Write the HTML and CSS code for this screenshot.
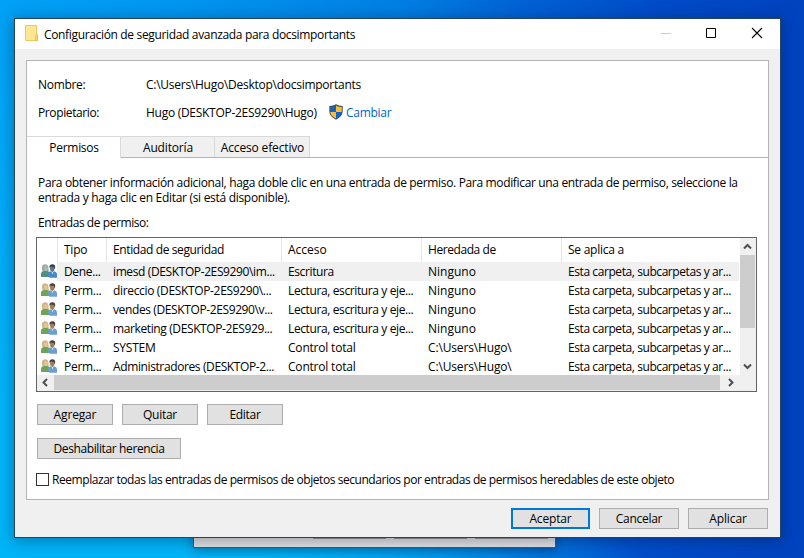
FILE: index.html
```html
<!DOCTYPE html>
<html lang="es">
<head>
<meta charset="utf-8">
<title>Configuración de seguridad avanzada</title>
<link rel="stylesheet" href="styles.css">
</head>
<body>
<svg width="0" height="0" class="defs">
  <defs>
    <symbol id="users" viewBox="0 0 16 14">
      <path class="u-hair1" d="M1.2 1.8Q2 .2 4.2.2Q6.900 .2 7.300 3L7.800 7.200L1.500 7.400Q.3 4 1.200 1.800Z"/>
      <path class="u-face1" d="M3.200 2.600L6.200 2.200L6.700 5.400L5.300 7.200L3.400 6Z"/>
      <path class="u-body1" d="M0 12.900V9.300Q.3 7.300 3 7L6.200 7Q8.800 7.200 9 9.300V13H2Z"/>
      <path class="u-face2" d="M8.800 2H13.500L13.300 6.200L11.300 8.200L9.300 6.500Z"/>
      <path class="u-hair2" d="M8.500 3.800V1.700Q9.300 0 11.400 .2Q14.300 .3 14.200 3.400L13.500 5.500L12.900 3L9.900 2.400Z"/>
      <path class="u-body2" d="M7.200 12V9.600Q7.500 7.800 9.600 7.300L11.300 8.500L13.200 7.300Q15.800 7.800 16 10V13.700H9Q7.200 13.300 7.200 12Z"/>
      <path class="u-shirt" d="M10.600 8L11.600 8.600L12.300 8L11.900 10.400Z"/>
    </symbol>
  </defs>
</svg>
<div class="back-window"><i></i><i></i><i></i></div>
<main class="window">
  <header class="titlebar">
    <svg class="folder" width="14" height="17" viewBox="0 0 14 17"><path d="M.5 .5H11.500V10L12.500 9.500V15.500H.5Z" fill="#ffe694" stroke="#ebcb5b"/><path d="M10.500 15V10.500L11.500 9.500H12.500V15.500H10.500Z" fill="#fbdc7c" stroke="#e7c04d"/></svg>
    <h1 class="s34">Configuración de seguridad avanzada para docsimportants</h1>
    <svg class="controls" width="104" height="12" viewBox="0 0 104 12" fill="none" stroke="#000"><path d="M1 6.500H11" stroke="#ccc"/><path d="M46.500 1.500H55.500V10.500H46.500Z"/><path d="M92 1L102 11M102 1L92 11" stroke-width="1.100"/></svg>
  </header>
  <section class="panel">
    <dl class="info">
      <dt class="s30">Nombre:</dt><dd class="s26">C:\Users\Hugo\Desktop\docsimportants</dd>
      <dt class="s38">Propietario:</dt>
      <dd><span class="s28 owner">Hugo (DESKTOP-2ES9290\Hugo)</span><svg width="14" height="16" viewBox="0 0 14 16"><path d="M7 .3Q10 2 13.700 2V7.500Q13.500 12.500 7 15.800Q.5 12.500 .3 7.500V2Q4 2 7 .3Z" fill="#4c535b"/><path d="M7 1.700V8H1.300V3Q4.500 3 7 1.700Z" fill="#0f64c8"/><path d="M7 1.700V8H12.700V3Q9.500 3 7 1.700Z" fill="#fdbc32"/><path d="M1.300 8H7V14.500Q1.800 12 1.300 8Z" fill="#fdbc32"/><path d="M12.700 8H7V14.500Q12.200 12 12.700 8Z" fill="#0f64c8"/></svg><a class="s28">Cambiar</a></dd>
    </dl>
    <nav class="tabs"><span class="tab active s30">Permisos</span><span class="tab s15">Auditoría</span><span class="tab s15">Acceso efectivo</span></nav>
    <div class="content">
      <p class="help"><span class="s34">Para obtener información adicional, haga doble clic en una entrada de permiso. Para modificar una entrada de permiso, seleccione la</span><br><span class="s30">entrada y haga clic en Editar (si está disponible).</span></p>
      <p class="label s43">Entradas de permiso:</p>
      <div class="list">
        <div class="rows">
          <div class="row head"><span></span><span class="s25">Tipo</span><span class="s38">Entidad de seguridad</span><span>Acceso</span><span class="s43">Heredada de</span><span class="s25">Se aplica a</span></div>
          <div class="row selected"><svg><use href="#users"/></svg><span class="s34">Dene...</span><span class="s38">imesd (DESKTOP-2ES9290\im...</span><span class="s38">Escritura</span><span>Ninguno</span><span class="s42">Esta carpeta, subcarpetas y ar...</span></div>
          <div class="row"><svg><use href="#users"/></svg><span class="s28">Perm...</span><span class="s34">direccio (DESKTOP-2ES9290\...</span><span class="s38">Lectura, escritura y eje...</span><span>Ninguno</span><span class="s42">Esta carpeta, subcarpetas y ar...</span></div>
          <div class="row"><svg><use href="#users"/></svg><span class="s28">Perm...</span><span class="s38">vendes (DESKTOP-2ES9290\v...</span><span class="s38">Lectura, escritura y eje...</span><span>Ninguno</span><span class="s42">Esta carpeta, subcarpetas y ar...</span></div>
          <div class="row"><svg><use href="#users"/></svg><span class="s28">Perm...</span><span class="s38">marketing (DESKTOP-2ES929...</span><span class="s38">Lectura, escritura y eje...</span><span>Ninguno</span><span class="s42">Esta carpeta, subcarpetas y ar...</span></div>
          <div class="row"><svg><use href="#users"/></svg><span class="s28">Perm...</span><span class="s24">SYSTEM</span><span class="s20">Control total</span><span class="s15">C:\Users\Hugo\</span><span class="s42">Esta carpeta, subcarpetas y ar...</span></div>
          <div class="row"><svg><use href="#users"/></svg><span class="s28">Perm...</span><span class="s38">Administradores (DESKTOP-2...</span><span class="s20">Control total</span><span class="s15">C:\Users\Hugo\</span><span class="s42">Esta carpeta, subcarpetas y ar...</span></div>
        </div>
        <div class="vscroll"><svg width="15" height="17" viewBox="0 0 15 17"><path d="M4 10.500L7.500 7L11 10.500"/></svg><i></i><svg width="15" height="17" viewBox="0 0 15 17"><path d="M4 6.500L7.500 10L11 6.500"/></svg></div>
        <div class="hscroll"><svg width="17" height="15" viewBox="0 0 17 15"><path d="M10 4L6.500 7.500L10 11"/></svg><i></i><svg width="20" height="15" viewBox="0 0 20 15"><path d="M9 4L12.500 7.500L9 11"/></svg></div>
      </div>
      <div class="actions"><button class="s15">Agregar</button><button class="s28">Quitar</button><button class="s30">Editar</button></div>
      <div class="actions"><button class="wide s38">Deshabilitar herencia</button></div>
      <label class="check"><i></i><span class="s44">Reemplazar todas las entradas de permisos de objetos secundarios por entradas de permisos heredables de este objeto</span></label>
    </div>
  </section>
  <footer><button class="primary s15">Aceptar</button><button class="s28">Cancelar</button><button class="s10">Aplicar</button></footer>
</main>
</body>
</html>
```
FILE: styles.css
```css
* { box-sizing: border-box; }
body {
  margin: 0; width: 804px; height: 558px; padding: 18px 0 0 14px;
  overflow: hidden; position: relative;
  font: 12px/15px "Open Sans", sans-serif; color: #000;
  background:
    radial-gradient(ellipse 560px 90px at 90px 570px, #00b4f8 35%, #00b0f600 100%),
    linear-gradient(180deg, #00b4f800 20px, #00b4f8 400px) 0 0 / 14px 100% no-repeat,
    linear-gradient(90deg, #00a2f6 0, #0096f0 180px, #007fe3 400px, #0060d3 530px, #004bc8 660px, #0142be 804px);
}
h1, p, dl, dd { margin: 0; }
.defs { position: absolute; }

.window {
  position: relative; width: 767px; height: 520px;
  border: 1px solid #24455f; background: #f0f0f0;
  box-shadow: 0 2px 14px 1px rgba(0, 20, 50, .35);
  display: flex; flex-direction: column;
}
.back-window {
  position: absolute; left: 193px; top: 500px; width: 363px; height: 48px;
  border: 1px solid #24618a; background: #e3e3e3;
  box-shadow: 0 2px 10px rgba(0, 20, 50, .4);
  padding: 0 7px 8px; display: flex; justify-content: flex-end; align-items: flex-end; gap: 8px;
}
.back-window i { width: 73px; height: 22px; background: #ccc; border: 1px solid #999; }

.titlebar { height: 30px; background: #fff; display: flex; align-items: center; padding: 0 16px 0 10px; }
.folder { margin-top: -1px; }
.titlebar h1 { flex: 1; margin-left: 5px; font-size: 12px; font-weight: 400; }
.controls { margin-top: -2px; }

.panel { margin: 11px 11px 0; height: 440px; border: 1px solid #b4b4b4; background: #fff; }
.info { display: grid; grid-template: 28px 28px / 108px 1fr; padding: 9px 11px 0; height: 75px; align-content: start; align-items: center; }
.info dd { display: flex; align-items: center; }
.info a { color: #0066cc; margin-left: 3px; }
.owner { width: 183px; }

.tabs { height: 22px; display: flex; border-bottom: 1px solid #b4b4b4; }
.tab { width: 94px; height: 21px; border: 1px solid #d9d9d9; border-width: 1px 1px 0 0; padding-left: 1px; background: #f0f0f0; line-height: 21px; text-align: center; }
.tab.active { height: 22px; background: #fff; }
.tab:last-child { width: 95px; }

.content { padding: 17px 10px 0 9px; }
.help { margin-left: 2px; white-space: nowrap; }
.label { margin: 10px 2px 7px; }
.list {
  width: 721px; height: 155px; border: 1px solid #646464;
  display: grid; grid-template: 137px 16px / 703px 16px;
}
.rows { overflow: hidden; }
.row { display: grid; grid-template-columns: 21px 49px 175px 140px 140px 178px; height: 19px; line-height: 20px; white-space: nowrap; }
.row span { padding-left: 6px; }
.row svg { width: 16px; height: 14px; margin: 2px 0 0 4px; }
.head { height: 24px; line-height: 24px; }
.head span { border-right: 1px solid #e5e5e5; }
.head span:last-child { border: 0; }
.selected { background: linear-gradient(#f0f0f0, #f0f0f0) 20px 0 / 682px 19px no-repeat; }
.selected svg { --hair1: #9aaba0; --face1: #a9bcc0; --body1: #4f8e7e; --hair2: #2f4250; --face2: #5f7486; --body2: #4689c6; }
.u-hair1 { fill: var(--hair1, #c9b883); } .u-face1 { fill: var(--face1, #e5c5a0); } .u-body1 { fill: var(--body1, #70a355); }
.u-hair2 { fill: var(--hair2, #45433f); } .u-face2 { fill: var(--face2, #a77c54); } .u-body2 { fill: var(--body2, #6a9fd0); }
.u-shirt { fill: #dceaf5; }

.vscroll { background: #f0f0f0; display: flex; flex-direction: column; justify-content: space-between; }
.vscroll i { width: 15px; height: 73px; margin-bottom: 30px; background: #cdcdcd; }
.hscroll { grid-column: 1 / 3; background: #f0f0f0; display: flex; }
.hscroll i { width: 666px; height: 15px; background: #cdcdcd; }
.list path[d^="M4"], .hscroll path { fill: none; stroke: #505050; stroke-width: 2; }

button { width: 76px; height: 21px; padding: 0; border: 1px solid #adadad; background: #e1e1e1; color: #000; font: 12px/19px "Open Sans", sans-serif; }
.actions { display: flex; gap: 9px; margin: 12px 0 13px 1px; }
.actions + .actions { margin-top: 13px; }
.wide { width: 144px; }
.check { display: flex; align-items: center; gap: 3px; white-space: nowrap; }
.check i { width: 13px; height: 13px; border: 1px solid #333; background: #fff; }
footer { display: flex; justify-content: flex-end; gap: 9px; padding: 8px 12px 0 0; }
footer button { width: 80px; }
footer .primary { width: 79px; border: 2px solid #0078d7; line-height: 17px; }

.s10 { letter-spacing: -.1px; } .s15 { letter-spacing: -.15px; } .s20 { letter-spacing: -.2px; }
.s24 { letter-spacing: -.24px; } .s25 { letter-spacing: -.25px; } .s26 { letter-spacing: -.26px; }
.s28 { letter-spacing: -.28px; } .s30 { letter-spacing: -.3px; } .s34 { letter-spacing: -.34px; }
.s38 { letter-spacing: -.385px; } .s42 { letter-spacing: -.42px; } .s43 { letter-spacing: -.43px; }
.s44 { letter-spacing: -.44px; }
```
